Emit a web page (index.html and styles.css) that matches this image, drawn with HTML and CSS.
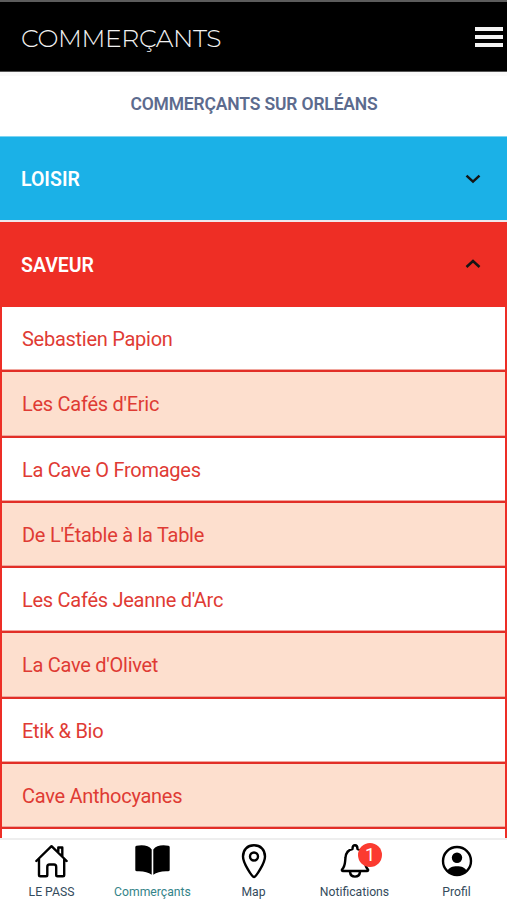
FILE: index.html
```html
<!DOCTYPE html>
<html lang="fr">
<head>
<meta charset="utf-8">
<title>Commerçants</title>
<link rel="stylesheet" href="styles.css">
</head>
<body>
<div class="app">
  <header class="topbar">
    <h1><span>COMMERÇANTS</span></h1>
    <button class="menu" aria-label="Menu"><i></i><i></i><i></i></button>
  </header>
  <h2 class="subtitle"><span>COMMERÇANTS SUR ORLÉANS</span></h2>
  <main>
    <section class="category loisir"><h3>LOISIR</h3>
      <svg width="16" height="10" viewBox="0 0 16 10"><path d="M1.5 1.6 8 7.6 14.5 1.6"/></svg>
    </section>
    <section class="category saveur"><h3>SAVEUR</h3>
      <svg width="16" height="10" viewBox="0 0 16 10"><path d="M1.5 8 8 2 14.5 8"/></svg>
    </section>
    <ul class="shops">
      <li>Sebastien Papion</li>
      <li>Les Cafés d'Eric</li>
      <li>La Cave O Fromages</li>
      <li>De L'Étable à la Table</li>
      <li>Les Cafés Jeanne d'Arc</li>
      <li>La Cave d'Olivet</li>
      <li>Etik &amp; Bio</li>
      <li>Cave Anthocyanes</li>
      <li></li>
    </ul>
  </main>
  <nav class="tabs">
    <a class="tab">
      <svg width="36" height="36" viewBox="0 0 36 36" class="line"><path d="M2.300 18 17.500 3.200 32.700 18M5 16.200V32Q5 33.300 6.300 33.300H12Q13.300 33.300 13.300 32V24Q13.300 21.500 15.500 21.500H20Q22.200 21.500 22.200 24V32Q22.200 33.300 23.500 33.300H28.900Q30.200 33.300 30.200 32V16.200M24.300 8.500V4.500H28.300V13"/></svg>
      <span>LE PASS</span>
    </a>
    <a class="tab active">
      <svg width="36" height="36" viewBox="0 0 36 36"><path d="M16.700 6.500V31.800Q11.500 27.800 2 28.300Q.3 28.300.3 27V4Q.3 3 1.500 2.800Q12.500 1 16.700 6.500ZM18.300 6.500V31.800Q23.500 27.800 33 28.300Q34.700 28.300 34.700 27V4Q34.700 3 33.500 2.800Q22.500 1 18.300 6.500Z"/></svg>
      <span>Commerçants</span>
    </a>
    <a class="tab">
      <svg width="36" height="36" viewBox="0 0 36 36" class="line"><path d="M18 34C16 34 7 20 7 13.500C7 6.500 11.500 2.300 18 2.300S29 6.500 29 13.500C29 20 20 34 18 34Z"/><circle cx="18" cy="13.500" r="4"/></svg>
      <span>Map</span>
    </a>
    <a class="tab">
      <svg width="36" height="36" viewBox="0 0 36 36" class="line"><path d="M5 26.500C8.500 23 7.800 20 8.500 14.500C9 9.500 11.500 6.800 15.500 6C15.500 3.200 16.500 2.200 18 2.200S20.500 3.200 20.500 6C24.500 6.800 27 9.500 27.500 14.500C28.200 20 27.500 23 31 26.500Q31.500 28 30 28H6Q4.500 28 5 26.500ZM13 29Q13.500 33.600 18 33.600T23 29"/></svg>
      <b class="badge">1</b>
      <span>Notifications</span>
    </a>
    <a class="tab profile">
      <svg width="36" height="36" viewBox="0 0 36 36" class="line"><circle cx="18" cy="18" r="14"/><circle cx="18" cy="14.800" r="5.200" class="solid"/><path class="solid" d="M8.300 28C10 24.300 13.500 23.200 18 23.200S26 24.300 27.700 28A14 14 0 0 1 8.300 28Z"/></svg>
      <span>Profil</span>
    </a>
  </nav>
</div>
</body>
</html>
```
FILE: styles.css
```css
* { box-sizing: border-box; }
body { margin: 0; font-family: Roboto, sans-serif; background: #fff; }
h1, h2, h3, ul { margin: 0; padding: 0; }
.app { height: 900px; display: flex; flex-direction: column; overflow: hidden; }
.topbar {
  flex: none; height: 72px; padding: 0 4px 0 21px;
  display: flex; align-items: center; justify-content: space-between;
  background: #000; border-top: 2px solid #5c5c5c; border-bottom: 1px solid #555;
}
h1 { font: 300 25px/30px Montserrat, Inter, sans-serif; color: #f2f2f2; letter-spacing: -0.38px; padding-top: 2px; }
.menu { width: 28px; height: 20px; padding: 0; border: 0; background: none; display: flex; flex-direction: column; justify-content: space-between; }
.menu i { height: 4px; background: #f4f4f4; }
.subtitle {
  flex: none; height: 64px; display: flex; align-items: center; justify-content: center;
  font-size: 17.5px; font-weight: 600; letter-spacing: -0.16px; color: #5c6b8e; border-top: 4px solid #fafafa; padding: 0 0 4px 1px;
}
main { flex: 1; min-height: 0; overflow: hidden; }
.category { display: flex; align-items: center; justify-content: space-between; padding: 0 26px 0 21px; color: #fff; }
.category h3 { font-size: 19.5px; font-weight: 600; line-height: 24px; padding-top: 2px; }
.category svg { fill: none; stroke: #151515; stroke-width: 2.5; }
.loisir { height: 86px; background: #1bb1e7; border-top: 1px solid #7dd4f2; border-bottom: 2px solid #f0e8ea; }
.saveur { height: 84px; background: #ee2e25; }
.saveur h3 { padding-top: 3px; }
.shops { list-style: none; border: solid #ed2e26; border-width: 1px 2px 0; }
.shops li {
  height: 65.25px; padding: 1px 20px 0; display: flex; align-items: center;
  font-size: 20px; letter-spacing: -0.27px; color: #df3b34;
  border-bottom: 2px solid #e22f27; box-shadow: inset 0 -1px #f0a79e;
}
.shops li:nth-child(even) { background: #fddfce; }
.tabs { flex: none; height: 62px; border-top: 2px solid #eee; display: grid; grid-template-columns: repeat(5, 101px); padding-left: 1px; background: #fff; }
.tab { position: relative; display: flex; flex-direction: column; align-items: center; padding-top: 3px; font-size: 12.200px; color: #344b5c; }
.tab svg { display: block; fill: #000; }
.tab svg.line { fill: none; stroke: #000; stroke-width: 2.4; stroke-linejoin: round; stroke-linecap: round; }
.tab svg .solid { fill: #000; stroke: none; }
.tab span { line-height: 16px; margin-top: 5px; }
.active { color: #348489; }
.profile { padding-left: 2px; }
.badge { position: absolute; left: 54px; top: 3px; width: 24px; height: 24px; border-radius: 50%; background: #fb3b30; color: #fff; font: 400 18px/23px Roboto, sans-serif; text-align: center; }
```
